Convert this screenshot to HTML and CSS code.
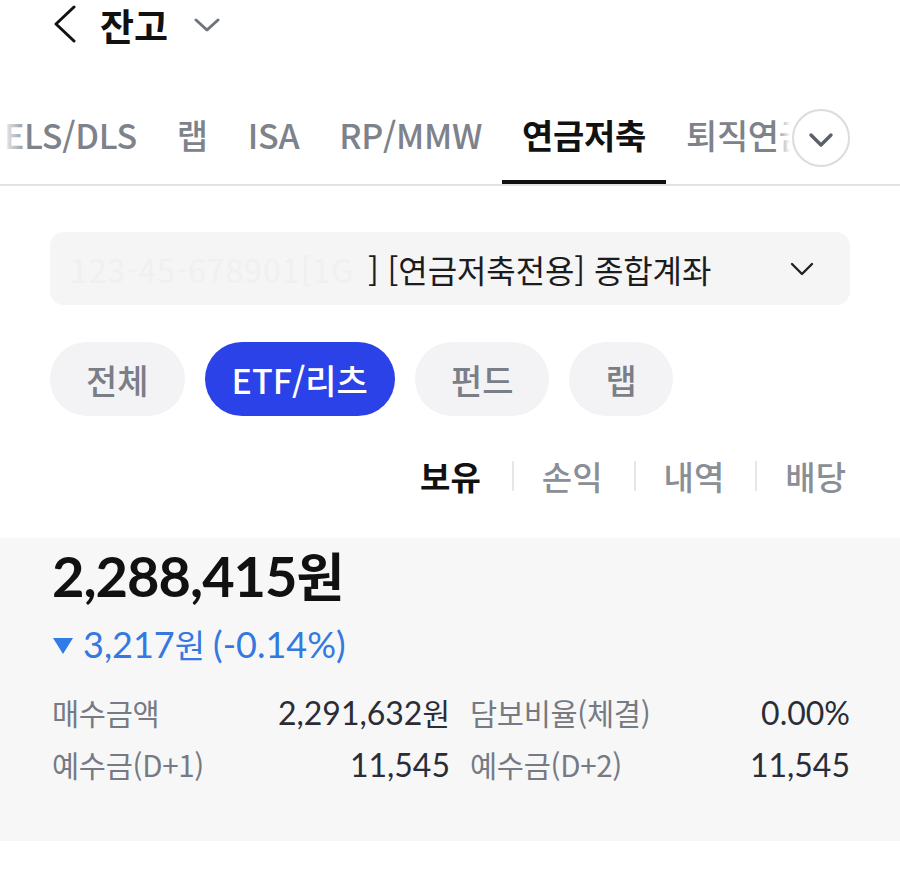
FILE: index.html
```html
<!DOCTYPE html>
<html lang="ko">
<head>
    <meta charset="UTF-8">
    <meta name="viewport" content="width=device-width, initial-scale=1.0">
    <title>잔고</title>
    <link rel="stylesheet" href="styles.css">
</head>
<body>

    <!-- 상단 헤더 -->
    <header class="top-bar">
        <svg class="back-icon" width="26" height="38" viewBox="0 0 26 38">
            <path d="M22 2 L4 19 L22 36" fill="none" stroke="#111" stroke-width="3" stroke-linecap="round" stroke-linejoin="round"/>
        </svg>
        <h1 class="page-title">잔고</h1>
        <svg class="title-caret" width="26" height="14" viewBox="0 0 26 14">
            <path d="M2 2 L13 12 L24 2" fill="none" stroke="#6f747c" stroke-width="3" stroke-linecap="round" stroke-linejoin="round"/>
        </svg>
    </header>

    <!-- 계좌 종류 탭 -->
    <nav class="account-tabs">
        <div class="tab-list">
            <span class="tab">ELS/DLS</span>
            <span class="tab">랩</span>
            <span class="tab">ISA</span>
            <span class="tab">RP/MMW</span>
            <span class="tab active">연금저축</span>
            <span class="tab">퇴직연금</span>
        </div>
        <div class="fade-left"></div>
        <div class="tab-more">
            <button class="more-btn">
                <svg width="26" height="16" viewBox="0 0 26 16">
                    <path d="M3 3 L13 13 L23 3" fill="none" stroke="#5b616b" stroke-width="3.4" stroke-linecap="round" stroke-linejoin="round"/>
                </svg>
            </button>
        </div>
    </nav>

    <!-- 계좌 선택 -->
    <div class="account-select">
        <span class="account-no">123-45-678901[1G</span><span class="account-name">] [연금저축전용] 종합계좌</span>
        <svg class="select-caret" width="24" height="14" viewBox="0 0 24 14">
            <path d="M2 2 L12 12 L22 2" fill="none" stroke="#222" stroke-width="2.4" stroke-linecap="round" stroke-linejoin="round"/>
        </svg>
    </div>

    <!-- 상품 필터 -->
    <div class="chips">
        <span class="chip">전체</span>
        <span class="chip selected">ETF/리츠</span>
        <span class="chip">펀드</span>
        <span class="chip">랩</span>
    </div>

    <!-- 보기 전환 -->
    <div class="view-tabs">
        <span class="view-tab active">보유</span>
        <span class="sep"></span>
        <span class="view-tab">손익</span>
        <span class="sep"></span>
        <span class="view-tab">내역</span>
        <span class="sep"></span>
        <span class="view-tab">배당</span>
    </div>

    <!-- 평가 요약 -->
    <section class="summary">
        <div class="total">2,288,415<span class="won">원</span></div>
        <div class="change"><span class="down-arrow"></span>3,217<span class="won">원</span> (-0.14%)</div>
        <div class="info-grid">
            <div class="info-row">
                <span class="label">매수금액</span>
                <span class="value">2,291,632<span class="won">원</span></span>
            </div>
            <div class="info-row">
                <span class="label">담보비율(체결)</span>
                <span class="value">0.00%</span>
            </div>
            <div class="info-row">
                <span class="label">예수금(D+1)</span>
                <span class="value">11,545</span>
            </div>
            <div class="info-row">
                <span class="label">예수금(D+2)</span>
                <span class="value">11,545</span>
            </div>
        </div>
    </section>

</body>
</html>
```

FILE: styles.css
```css
/* 잔고 화면 */
body {
    margin: 0;
    width: 900px;
    font-family: "Noto Sans CJK KR", "Noto Sans", sans-serif;
    background-color: #fff;
    color: #111;
}

.top-bar {
    display: flex;
    align-items: center;
    height: 50px;
    padding-left: 52px;
}
.back-icon {
    margin-top: -2px;
}
.page-title {
    margin: 0 0 0 22px;
    font-size: 37px;
    font-weight: 700;
    line-height: 48px;
}
.title-caret {
    margin: 0 0 0 26px;
}

.account-tabs {
    position: relative;
    margin-top: 40px;
    height: 94px;
    border-bottom: 2px solid #e2e2e4;
    overflow: hidden;
}
.tab-list {
    display: flex;
    height: 100%;
    margin-left: -16px;
    white-space: nowrap;
}
.tab {
    position: relative;
    display: flex;
    align-items: center;
    padding: 0 20px 6px;
    font-size: 34px;
    font-weight: 500;
    color: #7d828b;
    letter-spacing: -0.3px;
}
.tab.active {
    color: #111;
    font-weight: 700;
}
.tab.active::after {
    content: "";
    position: absolute;
    left: 0;
    right: 0;
    bottom: 0;
    height: 4px;
    background: #111;
}
.fade-left {
    position: absolute;
    left: 0;
    top: 0;
    width: 30px;
    height: 100%;
    background: linear-gradient(to right, #fff, rgba(255,255,255,0));
}
.tab-more {
    position: absolute;
    top: 0;
    right: 0;
    width: 124px;
    height: 92px;
    display: flex;
    align-items: center;
    justify-content: flex-end;
    padding-right: 50px;
    box-sizing: border-box;
    background: linear-gradient(to right, rgba(255,255,255,0), #fff 14px);
}
.more-btn {
    width: 58px;
    height: 58px;
    margin-top: 4px;
    border-radius: 50%;
    border: 2px solid #dcdcdf;
    background: #fff;
    display: flex;
    align-items: center;
    justify-content: center;
    padding: 0;
}
.more-btn svg {
    margin-top: 3px;
}

.account-select {
    display: flex;
    align-items: center;
    margin: 46px 50px 0;
    height: 73px;
    padding: 0 36px 0 20px;
    border-radius: 14px;
    background: #f5f5f6;
    font-size: 32px;
    color: #1c1c1e;
}
.account-no {
    width: 298px;
    color: #f0f0f1;
    overflow: hidden;
    white-space: nowrap;
    letter-spacing: 1px;
}
.account-name {
    flex: 1;
    letter-spacing: -0.1px;
}

.chips {
    display: flex;
    gap: 20px;
    margin: 37px 50px 0;
}
.chip {
    display: flex;
    align-items: center;
    justify-content: center;
    height: 74px;
    padding: 0 36px;
    border-radius: 37px;
    background: #f3f3f5;
    color: #7a7e86;
    font-size: 34px;
    font-weight: 500;
}
.chip.selected {
    background: #2a42e8;
    color: #fff;
    padding: 0 27px;
}

.view-tabs {
    display: flex;
    justify-content: flex-end;
    align-items: center;
    height: 60px;
    margin: 30px 54px 0 0;
    font-size: 33px;
    font-weight: 500;
    color: #8a8e96;
}
.view-tab.active {
    color: #111;
    font-weight: 700;
}
.sep {
    width: 2px;
    height: 30px;
    margin: 0 28px 0 31px;
    background: #e6e6e8;
}

.summary {
    margin-top: 32px;
    padding: 4px 50px 55px 52px;
    background: #f7f7f8;
    font-family: Lato, "Noto Sans CJK KR", sans-serif;
}
.total {
    font-size: 56px;
    font-weight: 700;
    line-height: 1.2;
    letter-spacing: -1px;
    color: #111;
}
.won {
    font-family: "Noto Sans CJK KR", sans-serif;
}
.total .won {
    font-size: 52px;
}
.change {
    display: flex;
    align-items: center;
    margin-top: 14px;
    font-size: 36px;
    line-height: 1.2;
    color: #3478e0;
}
.down-arrow {
    width: 0;
    height: 0;
    margin: 2px 10px 0 1px;
    border-left: 10px solid transparent;
    border-right: 10px solid transparent;
    border-top: 16px solid #2f7ce6;
}
.change .won {
    font-size: 33px;
    margin-right: 8px;
}
.info-grid {
    display: grid;
    grid-template-columns: 398px 1fr;
    column-gap: 20px;
    row-gap: 8px;
    margin-top: 24px;
}
.info-row {
    display: flex;
    justify-content: space-between;
    align-items: center;
    height: 44px;
}
.label {
    font-family: "Noto Sans CJK KR", sans-serif;
    font-size: 29.5px;
    color: #767a83;
    letter-spacing: -0.3px;
}
.value {
    font-size: 32px;
    color: #2a2d36;
}
.value .won {
    font-size: 30px;
}
```
